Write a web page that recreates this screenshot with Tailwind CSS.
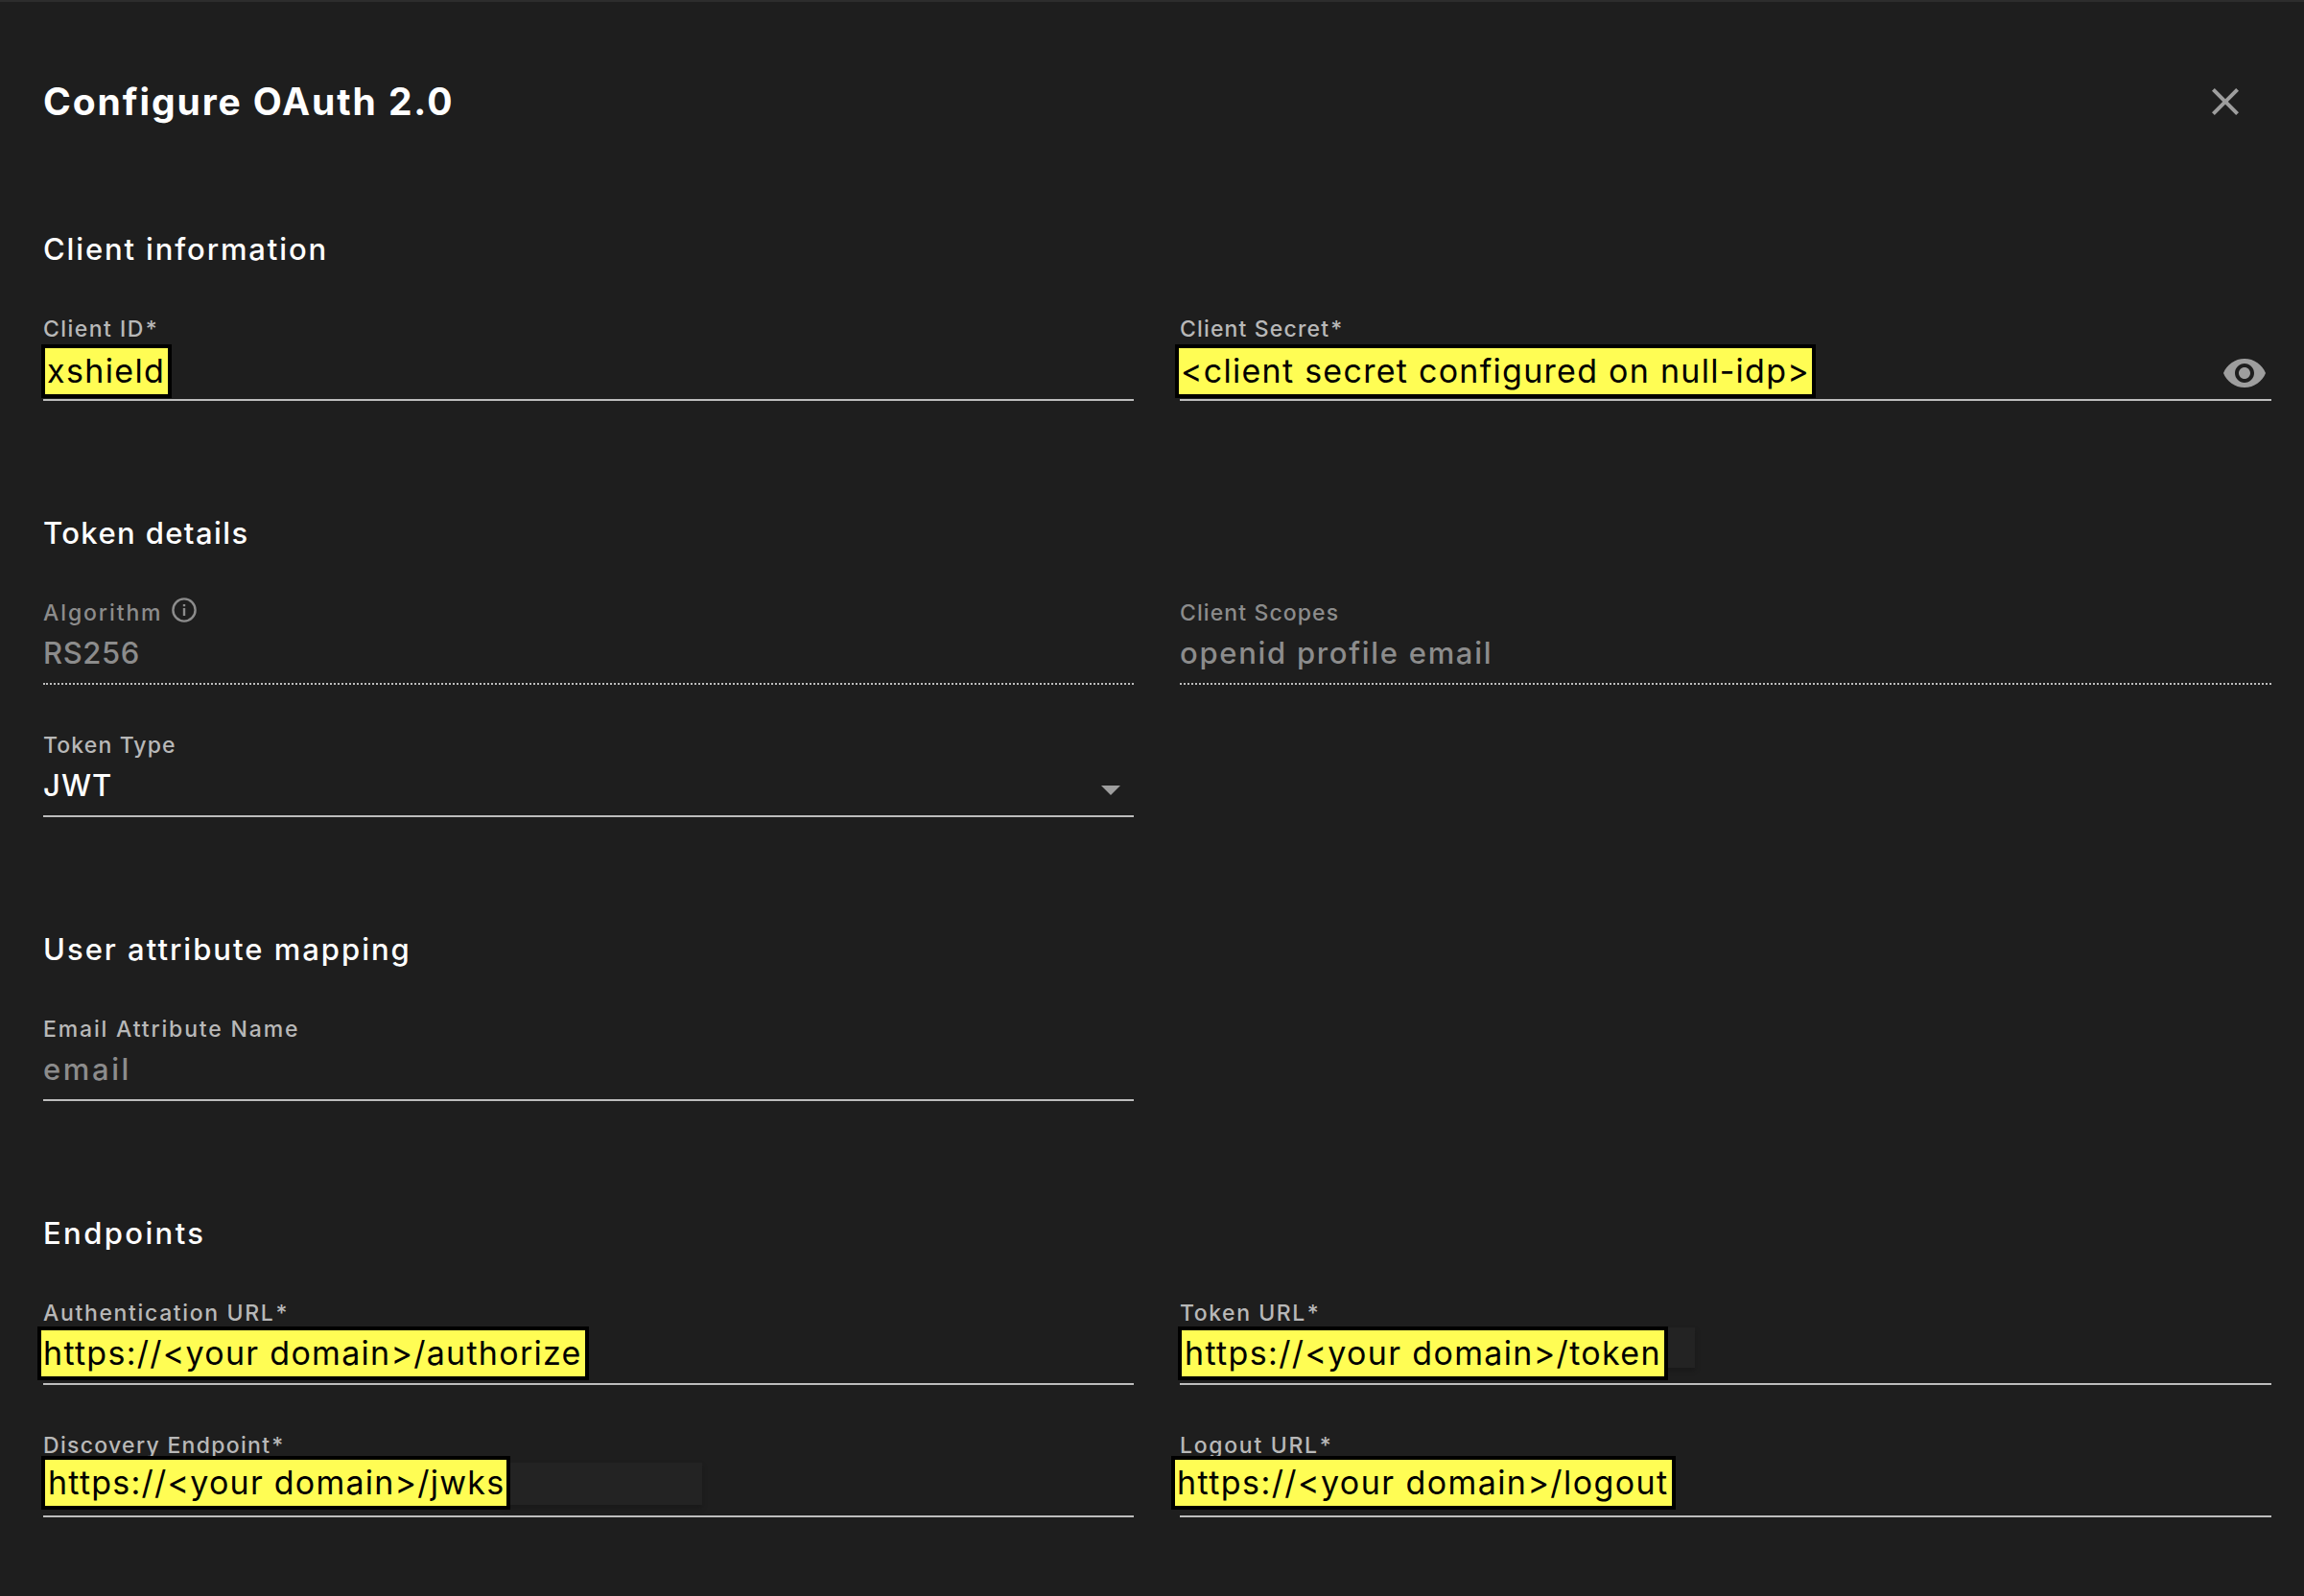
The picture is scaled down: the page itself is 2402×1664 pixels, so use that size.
<!DOCTYPE html>
<html lang="en">
<head>
<meta charset="utf-8">
<title>Configure OAuth 2.0</title>
<script src="https://cdn.jsdelivr.net/npm/@tailwindcss/browser@4"></script>
</head>
<body class="bg-[#1e1e1e] text-white font-[Inter,sans-serif]">
<main class="w-[2402px] h-[1664px] overflow-hidden border-t-2 border-[#2d2d2d] pt-20 pl-[45px] pr-[34px]">
  <header class="flex h-12 items-center justify-between mb-[110px]">
    <h1 class="text-[39px] leading-[48px] font-bold tracking-[1.9px] whitespace-nowrap">Configure OAuth 2.0</h1>
    <button class="mr-6" aria-label="Close">
      <svg class="block size-12 fill-[#9e9e9e]" viewBox="0 0 24 24"><path d="M19 6.41 17.59 5 12 10.59 6.41 5 5 6.41 10.59 12 5 17.59 6.41 19 12 13.41 17.59 19 19 17.59 13.41 12z"/></svg>
    </button>
  </header>

  <div class="flex flex-col gap-[118px]">
    <section>
      <h2 class="h-10 text-[31px] leading-10 font-medium tracking-[1.87px]">Client information</h2>
      <div class="grid grid-cols-[1137px_1138px] gap-x-12">
        <div class="relative h-[138px] border-b-2 border-[#bdbdbd] pt-[47px]">
          <div class="flex h-8 text-[23px] leading-8 font-medium text-[#b8b8b8]"><span class="tracking-[1.45px]">Client ID</span><span class="ml-px">*</span></div>
          <div class="absolute left-[-2px] top-[79px] h-14 w-[136px] border-4 border-black bg-[#fffd54] pl-[2px] text-[34px] leading-[48px] tracking-[1.35px] text-black whitespace-nowrap">xshield</div>
        </div>
        <div class="relative h-[138px] border-b-2 border-[#bdbdbd] pt-[47px]">
          <div class="flex h-8 text-[23px] leading-8 font-medium text-[#b8b8b8]"><span class="tracking-[1.15px]">Client Secret</span><span class="ml-px">*</span></div>
          <svg class="ml-auto mr-1 mt-[5.5px] block size-12 fill-[#9e9e9e]" viewBox="0 0 24 24"><path d="M12 4.5C7 4.5 2.73 7.61 1 12c1.73 4.39 6 7.5 11 7.5s9.27-3.11 11-7.5c-1.73-4.39-6-7.5-11-7.5zM12 17c-2.76 0-5-2.24-5-5s2.24-5 5-5 5 2.24 5 5-2.24 5-5 5zm0-8c-1.66 0-3 1.34-3 3s1.34 3 3 3 3-1.34 3-3-1.34-3-3-3z"/></svg>
          <div class="absolute left-[-5px] top-[79px] h-14 w-[668px] border-4 border-black bg-[#fffd54] pl-[2px] text-[34px] leading-[48px] tracking-[1.27px] text-black whitespace-nowrap">&lt;client secret configured on null-idp&gt;</div>
        </div>
      </div>
    </section>

    <section>
      <h2 class="h-10 text-[31px] leading-10 font-medium tracking-[1.4px]">Token details</h2>
      <div class="grid grid-cols-[1137px_1138px] gap-x-12">
        <div class="h-[138px] border-b-2 border-dotted border-[#bdbdbd] pt-[47px] text-[#8c8c8c]">
          <div class="flex h-8 text-[23px] leading-8 font-medium"><span class="tracking-[1.9px]">Algorithm</span>
            <svg class="ml-[10px] block size-[26px]" viewBox="0 0 26 26" fill="none" stroke="#8c8c8c"><circle cx="13" cy="13" r="11.6" stroke-width="2.4"/><path d="M13 7v2.2M13 11v8" stroke-width="2.4"/></svg>
          </div>
          <div class="mt-[6px] text-[31px] leading-10 font-medium tracking-[0.6px]">RS256</div>
        </div>
        <div class="h-[138px] border-b-2 border-dotted border-[#bdbdbd] pt-[47px] text-[#8c8c8c]">
          <div class="h-8 text-[23px] leading-8 font-medium tracking-[1.1px]">Client Scopes</div>
          <div class="mt-[6px] text-[31px] leading-10 font-medium tracking-[1.7px]">openid profile email</div>
        </div>
        <div class="h-[138px] border-b-2 border-[#bdbdbd] pt-[47px]">
          <div class="h-8 text-[23px] leading-8 font-medium tracking-[1.12px] text-[#b8b8b8]">Token Type</div>
          <div class="mt-[6px] flex items-center justify-between text-[31px] leading-10 font-medium tracking-[1.1px]">JWT
            <svg class="mr-[14px] mt-[9px] block h-[10px] w-5 fill-[#9e9e9e]" viewBox="0 0 20 10"><path d="M0 0h20L10 10z"/></svg>
          </div>
        </div>
      </div>
    </section>

    <section>
      <h2 class="h-10 text-[31px] leading-10 font-medium tracking-[2px]">User attribute mapping</h2>
      <div class="grid grid-cols-[1137px_1138px] gap-x-12">
        <div class="h-[138px] border-b-2 border-[#bdbdbd] pt-[47px]">
          <div class="h-8 text-[23px] leading-8 font-medium tracking-[1.84px] text-[#b8b8b8]">Email Attribute Name</div>
          <div class="mt-[6px] text-[31px] leading-10 font-medium tracking-[2.6px] text-[#8c8c8c]">email</div>
        </div>
      </div>
    </section>

    <section>
      <h2 class="h-10 text-[31px] leading-10 font-medium tracking-[2.4px]">Endpoints</h2>
      <div class="grid grid-cols-[1137px_1138px] gap-x-12">
        <div class="relative h-[138px] border-b-2 border-[#bdbdbd] pt-[47px]">
          <div class="flex h-8 text-[23px] leading-8 font-medium text-[#b8b8b8]"><span class="tracking-[1.65px]">Authentication URL</span><span class="ml-px">*</span></div>
          <div class="absolute left-[-6px] top-[77px] h-14 w-[575px] border-4 border-black bg-[#fffd54] pl-[2px] text-[34px] leading-[48px] tracking-[1.28px] text-black whitespace-nowrap">https://&lt;your domain&gt;/authorize</div>
        </div>
        <div class="relative h-[138px] border-b-2 border-[#bdbdbd] pt-[47px]">
          <div class="flex h-8 text-[23px] leading-8 font-medium text-[#b8b8b8]"><span class="tracking-[1.55px]">Token URL</span><span class="ml-px">*</span></div>
          <div class="absolute left-[500px] top-[78px] h-[42px] w-[37px] bg-[#232323] shadow-[0_3px_4px_#191919]"></div>
          <div class="absolute left-[-2px] top-[77px] h-14 w-[511px] border-4 border-black bg-[#fffd54] pl-[3px] text-[34px] leading-[48px] tracking-[1.35px] text-black whitespace-nowrap">https://&lt;your domain&gt;/token</div>
        </div>
        <div class="relative h-[138px] border-b-2 border-[#bdbdbd] pt-[47px]">
          <div class="flex h-8 text-[23px] leading-8 font-medium text-[#b8b8b8]"><span class="tracking-[1.3px]">Discovery Endpoint</span><span class="ml-px">*</span></div>
          <div class="absolute left-[480px] top-[81px] h-[44px] w-[207px] bg-[#232323] shadow-[0_3px_4px_#191919]"></div>
          <div class="absolute left-[-2px] top-[74px] h-14 w-[489px] border-4 border-black bg-[#fffd54] pl-[3px] text-[34px] leading-[48px] tracking-[1.24px] text-black whitespace-nowrap">https://&lt;your domain&gt;/jwks</div>
        </div>
        <div class="relative h-[138px] border-b-2 border-[#bdbdbd] pt-[47px]">
          <div class="flex h-8 text-[23px] leading-8 font-medium text-[#b8b8b8]"><span class="tracking-[1.7px]">Logout URL</span><span class="ml-px">*</span></div>
          <div class="absolute left-[-9px] top-[74px] h-14 w-[526px] border-4 border-black bg-[#fffd54] pl-[2px] text-[34px] leading-[48px] tracking-[1.43px] text-black whitespace-nowrap">https://&lt;your domain&gt;/logout</div>
        </div>
      </div>
    </section>
  </div>
</main>
</body>
</html>
